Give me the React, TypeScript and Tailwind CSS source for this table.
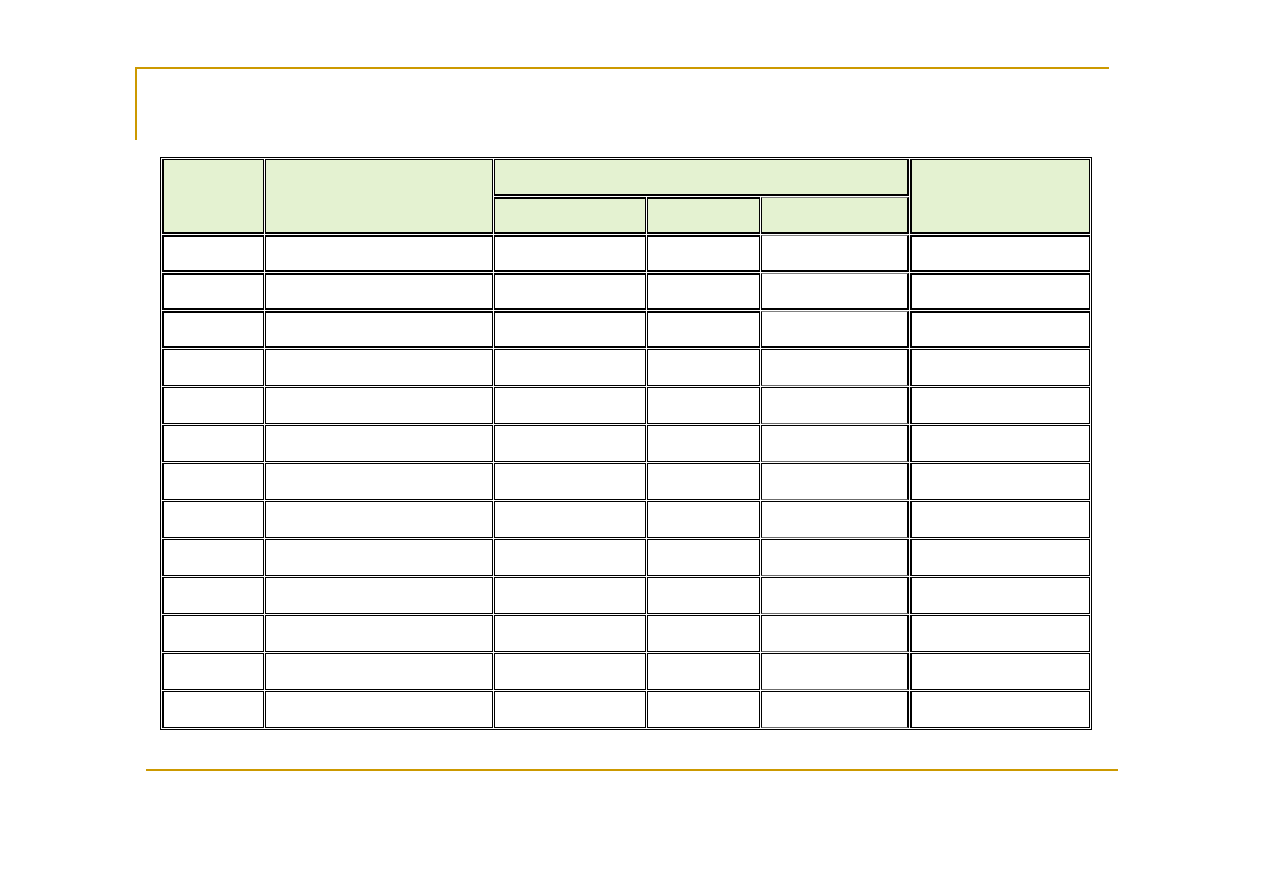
import React from "react";

// empty grid: 13 body rows under a two-level header
const bodyRows = Array.from({ length: 13 }, (_, i) => i);

export default function App() {
  const head = "bg-[#e4f2d1] border border-black p-0";
  const cell = "bg-white border border-black p-0 h-[37px]";

  return (
    <div className="min-h-[893px] w-[1263px] bg-white font-['Liberation_Sans',Arial,sans-serif]">
      {/* title frame */}
      <div className="pt-[67px] pl-[135px]">
        <div className="w-[974px] h-[73px] border-t-2 border-l-2 border-[#cc9900]" />
      </div>

      <div className="pl-[160px] pt-[17px]">
        <table className="table-fixed border-separate border-spacing-[1px] border border-black w-[932px] bg-white">
          <colgroup>
            <col className="w-[102px]" />
            <col className="w-[228px]" />
            <col className="w-[152px]" />
            <col className="w-[113px]" />
            <col className="w-[148px]" />
            <col className="w-[180px]" />
          </colgroup>
          <thead>
            <tr className="h-[37px]">
              <th rowSpan={2} className={`${head} border-l-2 border-b-2`} />
              <th rowSpan={2} className={`${head} border-b-2`} />
              <th colSpan={3} className={`${head} border-b-2 border-r-2`} />
              <th rowSpan={2} className={`${head} border-b-2 border-l-2`} />
            </tr>
            <tr className="h-[37px]">
              <th className={`${head} border-t-2 border-b-2`} />
              <th className={`${head} border-t-2 border-b-2`} />
              <th className={`${head} border-t-[#808080] border-b-2 border-r-2`} />
            </tr>
          </thead>
          <tbody>
            {bodyRows.map((r) => {
              const thick = r < 3;
              return (
                <tr key={r} className="h-[37px]">
                  <td className={`${cell} border-l-2 ${thick ? "border-t-2 border-b-2" : ""}`} />
                  <td className={`${cell} ${thick ? "border-t-2 border-b-2" : ""}`} />
                  <td className={`${cell} ${thick ? "border-t-2 border-b-2" : ""}`} />
                  <td className={`${cell} ${thick ? "border-t-2 border-b-2" : ""}`} />
                  <td
                    className={`${cell} border-r-2 ${
                      thick ? "border-t-[#808080] border-b-2" : "border-b-[#6b6b6b]"
                    }`}
                  />
                  <td className={`${cell} border-l-2 ${thick ? "border-t-2 border-b-2" : ""}`} />
                </tr>
              );
            })}
          </tbody>
        </table>
      </div>

      {/* footer rule */}
      <div className="pl-[146px] pt-[39px]">
        <div className="w-[972px] h-[2px] bg-[#cc9900]" />
      </div>
    </div>
  );
}
